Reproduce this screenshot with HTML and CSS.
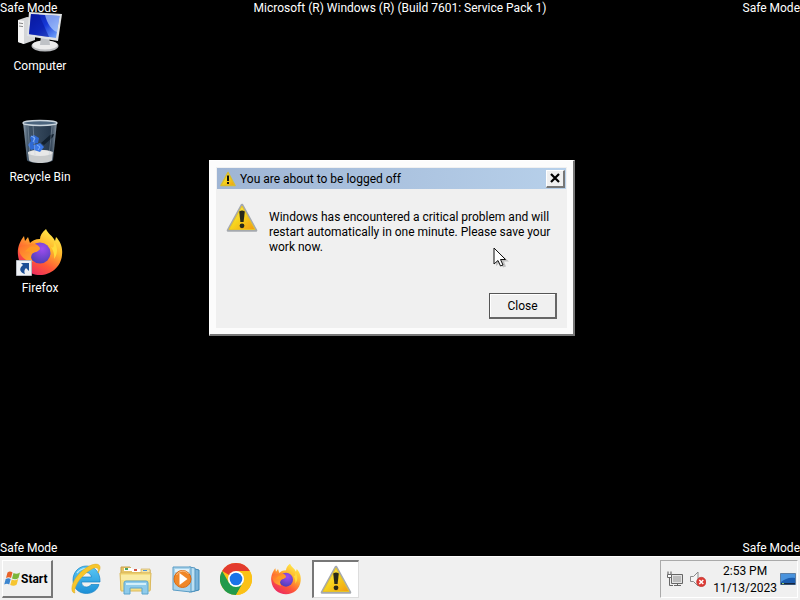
FILE: index.html
```html
<!DOCTYPE html>
<html lang="en">
<head>
<meta charset="utf-8">
<title>Desktop - Safe Mode</title>
<link rel="stylesheet" href="styles.css">
</head>

<body>
	<!-- shared shapes begin -->
	<svg class="defs" aria-hidden="true">
		<defs>
			<linearGradient id="warn-fill" x1="0" y1="0" x2="1" y2="1">
				<stop offset="0" stop-color="#fff36a"/>
				<stop offset=".5" stop-color="#f6d21c"/>
				<stop offset="1" stop-color="#f39a10"/>
			</linearGradient>
			<linearGradient id="fox-body" x1=".8" y1="0" x2=".2" y2="1">
				<stop offset="0" stop-color="#fff44f"/>
				<stop offset=".35" stop-color="#ffb52c"/>
				<stop offset=".65" stop-color="#ff5a36"/>
				<stop offset="1" stop-color="#e8206a"/>
			</linearGradient>
			<radialGradient id="fox-globe" cx=".6" cy=".3" r=".7">
				<stop offset="0" stop-color="#a04df0"/>
				<stop offset="1" stop-color="#4f3fb8"/>
			</radialGradient>
			<linearGradient id="fox-head" x1="0" y1="0" x2="1" y2="1">
				<stop offset="0" stop-color="#ff6a2c"/>
				<stop offset="1" stop-color="#ffbd30"/>
			</linearGradient>
		</defs>
		<symbol id="warning" viewBox="0 0 32 30">
			<path d="M16 2 30 27.500H2z" fill="#8b8f96" stroke="#a5a9ae" stroke-width="2.600" stroke-linejoin="round"/>
			<path d="M16 3 29 26.500H3z" fill="url(#warn-fill)" stroke="#e6c32a" stroke-width="1" stroke-linejoin="round"/>
			<path d="M13.200 8.500q2.800-1.800 5.600 0l-1.200 10.500h-3.200z" fill="#28291a"/>
			<circle cx="16" cy="22.800" r="2.400" fill="#28291a"/>
		</symbol>
		<symbol id="firefox" viewBox="0 0 48 48">
			<path d="M30 1c-4 3-6 7-6 10-5 0-8 2-10 4l-2-6-3 4-1-5C4 13 1 20 2 27c1 12 11 20 22 20s21-8 22-20c1-8-2-14-6-18l-1 4c-2-5-7-7-9-12z" fill="url(#fox-body)"/>
			<circle cx="24" cy="25" r="10.500" fill="url(#fox-globe)"/>
			<path d="M31 15c5 4 8 9 7 16 4-5 4-12 0-17 1 9-4 5-7 1z" fill="#ffdc3c"/>
			<path d="M3 20c2-2 5-4 9-3 4-3 10-1 12 3-1 4-5 4-7 5-2 2-3 5 0 9C9 33 3 28 3 20z" fill="url(#fox-head)"/>
			<path d="M14 19c4-1 8 0 10 2-2 2-5 2-7 4-3-1-6-2-8-1 1-2 3-4 5-5z" fill="#ff9a24"/>
		</symbol>
	</svg>
	<!-- shared shapes end -->

	<main class="desktop">
		<h1 class="build">Microsoft (R) Windows (R) (Build 7601: Service Pack 1)</h1>

		<nav class="shortcuts">
			<button type="button" class="shortcut">
				<svg width="48" height="48" viewBox="0 0 48 48" aria-hidden="true">
					<defs>
						<linearGradient id="screen" x1="0" y1="0" x2="1" y2="1">
							<stop offset="0" stop-color="#0a1a9c"/>
							<stop offset=".5" stop-color="#1638d8"/>
							<stop offset="1" stop-color="#7fb4ff"/>
						</linearGradient>
					</defs>
					<path d="M2 14l9-3 8 1v22l-11 4-6-2z" fill="#d4d6d8"/>
					<path d="M2 14l6 1v23l-6-2z" fill="#f4f4f4"/>
					<path d="M3 17l4 .6M3 20l4 .6" stroke="#888" stroke-width="1"/>
					<ellipse cx="29" cy="40" rx="13.500" ry="5.500" fill="#b8babd"/>
					<ellipse cx="29" cy="39" rx="12.500" ry="4.500" fill="#ececec"/>
					<path d="M25 30h8l1 9h-10z" fill="#bfc2c6"/>
					<path d="M13 6l33 2-4 27-31-5z" fill="#dfe2e5"/>
					<path d="M15 8l28.500 2-3.500 22-27-4z" fill="url(#screen)"/>
					<path d="M15 8l8 .6 10 22.400-6-.8-14-2z" fill="#0718a0" opacity=".6"/>
					<path d="M29 9l14.500 1-2.500 16c-5-1-10-9-12-17z" fill="#b8d6ff" opacity=".65"/>
				</svg>
				<span>Computer</span>
			</button>
			<button type="button" class="shortcut">
				<svg width="48" height="48" viewBox="0 0 48 48" aria-hidden="true">
					<defs>
						<linearGradient id="glass" x1="0" y1="0" x2="1" y2="0">
							<stop offset="0" stop-color="#90a0ae"/>
							<stop offset=".15" stop-color="#3f5367"/>
							<stop offset=".8" stop-color="#26384c"/>
							<stop offset="1" stop-color="#8d9ba8"/>
						</linearGradient>
					</defs>
					<path d="M7 5h34l-4 38c-1 4-25 4-26 0z" fill="url(#glass)"/>
					<path d="M12 35c5-3 19-3 25 0l-1 8c-2 4-22 4-23 0z" fill="#c9cbcc"/>
					<ellipse cx="24" cy="36" rx="12" ry="3" fill="#e8e8e8"/>
					<path d="M14 20l4-2 5 3-1 5-5 1 4 4-6 2-3-5 3-4z" fill="#2f69d2"/>
					<path d="M18 28l6-2 4 4-4 5-6-2z" fill="#3b78e6"/>
					<path d="M15 19l4 2-2 4M21 28l3 2-2 3" fill="none" stroke="#7db0ff"/>
					<path d="M25 26l9-8 4-1-1 3-9 8z" fill="#12202e"/>
					<path d="M12 9l2 31M17 8l2 30M36 9l-3 31" stroke="#bac8d5" opacity=".35"/>
					<ellipse cx="24" cy="6" rx="17" ry="2.500" fill="#4c657e" stroke="#cbd5dd" stroke-width="1.300"/>
				</svg>
				<span>Recycle Bin</span>
			</button>
			<button type="button" class="shortcut">
				<svg width="48" height="48" viewBox="0 0 48 48" aria-hidden="true">
					<use href="#firefox"/>
					<path d="M.5 32.500h15v15H.5z" fill="#eef1f5" stroke="#b5b9c0"/>
					<path d="M5 35h8v8l-3-3c-2 2-2 4-1 6-6-2-6-6-2-9z" fill="#1d4f96"/>
				</svg>
				<span>Firefox</span>
			</button>
		</nav>

		<span class="mode mode-tl">Safe Mode</span>
		<span class="mode mode-tr">Safe Mode</span>
		<span class="mode mode-bl">Safe Mode</span>
		<span class="mode mode-br">Safe Mode</span>

		<!-- dialog begin -->
		<section class="dialog" role="alertdialog" aria-labelledby="dialog-title" aria-describedby="dialog-text">
			<header class="titlebar">
				<svg width="16" height="16" viewBox="0 0 16 16" aria-hidden="true">
					<path d="M8 1.500 15 14.500H1z" fill="url(#warn-fill)" stroke="#d9bd2c" stroke-width="1.500" stroke-linejoin="round"/>
					<path d="M7 4.500h2v5.500H7zM7 11h2v2H7z" fill="#111"/>
				</svg>
				<h2 id="dialog-title">You are about to be logged off</h2>
				<button type="button" class="btn-x" aria-label="Close window">
					<svg width="10" height="10" viewBox="0 0 10 10" aria-hidden="true"><path d="M1 1l8 8M9 1L1 9" stroke="#000" stroke-width="2.200"/></svg>
				</button>
			</header>
			<div class="dialog-body">
				<svg width="32" height="30" aria-hidden="true"><use href="#warning"/></svg>
				<p id="dialog-text">Windows has encountered a critical problem and will restart automatically in one minute. Please save your work now.</p>
			</div>
			<footer class="dialog-foot">
				<button type="button" class="btn">Close</button>
			</footer>
		</section>
		<!-- dialog end -->

		<svg class="cursor" width="16" height="22" viewBox="0 0 16 22" aria-hidden="true">
			<path d="M3 3v16l4-3.500 3 5 3-1-2-5h5z" fill="#000" opacity=".2"/>
			<path d="M1 1v16l4-3.500 2.500 5.500 2.500-1-2.500-5.500h5z" fill="#fff" stroke="#111"/>
		</svg>
	</main>

	<!-- taskbar begin -->
	<footer class="taskbar">
		<button type="button" class="start">
			<svg width="17" height="17" viewBox="0 0 17 17" aria-hidden="true">
				<path d="M3.500 2.500c2-1.500 3.500-1 5 0L7 8C5.500 7 4 7 2 8z" fill="#e8632a"/>
				<path d="M9.500 3c2 1 4 1 6.500-.5L14.500 8c-2 1.500-4 1.500-6.500.5z" fill="#7db63a"/>
				<path d="M1.700 9c2-1.200 3.500-1 5 0l-1.500 5.500c-1.500-1-3-1-5 0z" fill="#3d86cf"/>
				<path d="M7.700 9.500c2 1 4 1 6.500-.5l-1.500 5.500c-2 1.500-4 1.500-6.500.5z" fill="#f6c530"/>
			</svg>
			<span>Start</span>
		</button>
		<nav class="tasks">
			<button type="button" class="task" aria-label="Internet Explorer">
				<svg width="32" height="32" viewBox="0 0 32 32" aria-hidden="true">
					<defs>
						<linearGradient id="ie" x1="0" y1="0" x2="0" y2="1">
							<stop offset="0" stop-color="#5bc8f5"/>
							<stop offset="1" stop-color="#1c8fd6"/>
						</linearGradient>
					</defs>
					<path d="M16.500 3C9 3 3 9 3 17s5.500 13.500 13.500 13.500c6 0 11-3.500 12.500-9h-8c-1 1.500-2.500 2.500-4.500 2.500-3 0-5-2-5-5H30C30.500 9.500 24.500 3 16.500 3zM11.500 14c.5-2.500 2.500-4.500 5-4.500s4.500 2 5 4.500z" fill="url(#ie)" fill-rule="evenodd" stroke="#1681c4" stroke-width=".7"/>
					<path d="M7 10c3-4 8-5 12-4" fill="none" stroke="#b5e9fc" stroke-width="1.300"/>
					<path d="M5 30C0 30 1 20 8 12 15 4 25-1 29 2c2 2 1 5-1 8 1-4 0-6-4-5C19 7 12 13 8 19c-3 5-4 9-3 11z" fill="#f6c62c" stroke="#dfa81a" stroke-width=".5"/>
				</svg>
			</button>
			<button type="button" class="task" aria-label="Windows Explorer">
				<svg width="34" height="32" viewBox="0 0 34 32" aria-hidden="true">
					<path d="M2 4h9l2 3h18v20H2z" fill="#e6c467" stroke="#c9a249"/>
					<path d="M5 5h8v3H5z" fill="#fff"/>
					<path d="M6 5h3v2H6z" fill="#4aa564"/>
					<path d="M13 6h9v3h-9z" fill="#fff"/>
					<path d="M15 6h3v2h-3z" fill="#d65442"/>
					<path d="M22 6h9v4h-9z" fill="#f6e6a6" stroke="#c9a249" stroke-width=".6"/>
					<path d="M24 7h4v1h-4z" fill="#4d93d8"/>
					<path d="M1 10h31l-1 18H2z" fill="#f6df83" stroke="#dcb95c"/>
					<path d="M2 12h29v5H2z" fill="#fdf3bd" opacity=".6"/>
					<path d="M5 31V20q0-2 2-2h20q2 0 2 2v11h-6v-6H11v6z" fill="#8fcbea" stroke="#5ba4cd"/>
					<path d="M7 20h20v2H7z" fill="#d3effa"/>
				</svg>
			</button>
			<button type="button" class="task" aria-label="Windows Media Player">
				<svg width="32" height="32" viewBox="0 0 32 32" aria-hidden="true">
					<path d="M21 5l8 2v20l-8 2z" fill="#78b4db" stroke="#3d87b6"/>
					<path d="M19 4l6 1v23l-6 1z" fill="#bde0f2" stroke="#5094c0"/>
					<path d="M3 4h18v25L3 27z" fill="#a9d3eb" stroke="#5a9dc6"/>
					<path d="M5 6h14v3H5z" fill="#dff2fb"/>
					<circle cx="12.500" cy="16" r="8.500" fill="#f08728" stroke="#d96b14"/>
					<path d="M6.500 12c3-5 9-5 12-1" fill="none" stroke="#ffc68e"/>
					<path d="M9.500 10l8 6-8 6z" fill="#fff"/>
				</svg>
			</button>
			<button type="button" class="task" aria-label="Google Chrome">
				<svg width="32" height="32" viewBox="0 0 32 32" aria-hidden="true">
					<circle cx="16" cy="16" r="16" fill="#fbc116"/>
					<path d="M16 16L2.140 8A16 16 0 0 1 29.860 8z" fill="#e33b2e"/>
					<path d="M16 8h13.860L16 16z" fill="#e33b2e"/>
					<path d="M2.140 8A16 16 0 0 0 16 32l6.930-12L16 16 9.070 20z" fill="#229a4b"/>
					<path d="M22.930 20L16 32A16 16 0 0 0 29.860 8H16z" fill="#fbc116"/>
					<circle cx="16" cy="16" r="8" fill="#fff"/>
					<circle cx="16" cy="16" r="6.300" fill="#1a73e8"/>
				</svg>
			</button>
			<button type="button" class="task" aria-label="Firefox">
				<svg width="32" height="32" aria-hidden="true"><use href="#firefox"/></svg>
			</button>
			<button type="button" class="task active" aria-label="You are about to be logged off">
				<svg width="32" height="30" aria-hidden="true"><use href="#warning"/></svg>
			</button>
		</nav>
		<div class="tray">
			<svg width="16" height="16" viewBox="0 0 16 16" role="img" aria-label="Network">
				<path d="M4.500 3.500h11v9h-11z" fill="#e4e4e4" stroke="#666"/>
				<path d="M6 5h8v6H6z" fill="#bcbcbc"/>
				<path d="M7 14.500h7M10.500 12v2" stroke="#666"/>
				<path d="M1 .5v3M4 .5v3" stroke="#555"/>
				<path d="M.5 3.500h4v3h-4z" fill="#fff" stroke="#666"/>
				<path d="M2.500 7v7.500H6" fill="none" stroke="#666"/>
			</svg>
			<svg width="16" height="16" viewBox="0 0 16 16" role="img" aria-label="Muted">
				<path d="M.5 5.500h3L8 1v14l-4.500-4.500h-3z" fill="#f4f4f4" stroke="#8a8a8a"/>
				<circle cx="11.300" cy="11" r="4.700" fill="#dd3b35" stroke="#b8312c" stroke-width=".6"/>
				<path d="M9.300 9l4 4M13.300 9l-4 4" stroke="#fff" stroke-width="1.500"/>
			</svg>
			<div class="tray-end">
				<time class="clock" datetime="2023-11-13T14:53">2:53 PM<br>11/13/2023</time>
				<svg width="16" height="16" viewBox="0 0 16 16" role="img" aria-label="Show desktop">
					<path d="M.5 2.500h15v11H.5z" fill="#1b5cae" stroke="#5d7fa5"/>
					<path d="M1 3h14v4C9 6 5 8 1 11z" fill="#4a93dd"/>
					<path d="M1 12h14v1.500H1z" fill="#15263e"/>
					<path d="M2 12h2v1H2z" fill="#8ed06c"/>
				</svg>
			</div>
		</div>
	</footer>
	<!-- taskbar end -->
</body>

</html>
```
FILE: styles.css
```css
* { box-sizing: border-box; margin: 0; padding: 0; }
body { display: flex; flex-direction: column; height: 100vh; overflow: hidden; background: #000; color: #000; font: 12px/15px Roboto, "Open Sans", sans-serif; }
button { font: inherit; color: inherit; border: 0; background: none; }
svg { display: block; flex: none; }
h1, h2 { font: inherit; }
.defs { position: absolute; width: 0; height: 0; }

/* desktop */
.desktop { position: relative; flex: 1; padding-top: 1px; color: #fff; }
.build { text-align: center; }
.mode { position: absolute; }
.mode-tl { top: 1px; left: 0; }
.mode-tr { top: 1px; right: 0; }
.mode-bl { bottom: 0; left: 0; }
.mode-br { bottom: 0; right: 0; }
.shortcuts { position: absolute; top: 6px; left: 0; display: flex; flex-direction: column; gap: 43px; width: 80px; }
.shortcut { display: flex; flex-direction: column; align-items: center; gap: 5px; }

/* dialog */
.dialog { position: absolute; top: 160px; left: 209px; width: 366px; padding: 7px; background: #f0f0f0; color: #000; border: 1px solid #fff; border-right: 2px solid #777; border-bottom: 2px solid #777; box-shadow: inset 0 0 0 6px #fcfcfc; }
.titlebar { display: flex; align-items: center; gap: 4px; height: 21px; padding: 0 1px 0 3px; background: linear-gradient(to right, #9fb5d4, #b7d0ea); }
.titlebar h2 { flex: 1; padding-top: 2px; }
.btn-x { display: grid; place-items: center; width: 19px; height: 18px; background: #f0f0f0; border: 1px solid #fff; border-right: 2px solid #777; border-bottom: 2px solid #777; }
.dialog-body { display: flex; gap: 11px; padding: 14px 6px 0 9px; }
.dialog-body p { padding-top: 7px; }
.dialog-foot { display: flex; justify-content: flex-end; padding: 38px 9px 8px; }
.btn { width: 68px; height: 26px; padding-top: 2px; background: #f0f0f0; border: 1px solid #555; border-right: 2px solid #666; border-bottom: 2px solid #666; box-shadow: inset 1px 1px 0 #fff; }
.cursor { position: absolute; top: 247px; left: 493px; }

/* taskbar */
.taskbar { display: flex; height: 44px; padding: 3px 2px 2px; background: #f0f0f0; border-top: 1px solid #fff; }
.start { display: flex; align-items: center; width: 51px; padding-left: 1px; font-weight: bold; border: 1px solid #fff; border-right: 2px solid #777; border-bottom: 2px solid #777; }
.start span { padding-top: 2px; }
.tasks { display: flex; flex: 1; gap: 3px; padding-left: 9px; }
.task { display: grid; place-items: center; width: 47px; }
.task.active { background: #fff; border: 2px solid #777; border-right: 1px solid #ddd; border-bottom: 1px solid #ddd; }
.tray { display: flex; align-items: center; gap: 7px; padding: 0 1px 0 6px; border: 1px solid #aaa; border-right-color: #fff; border-bottom-color: #fff; }
.tray-end { display: flex; align-items: center; gap: 3px; }
.clock { padding-top: 2px; line-height: 17px; text-align: center; }
```
